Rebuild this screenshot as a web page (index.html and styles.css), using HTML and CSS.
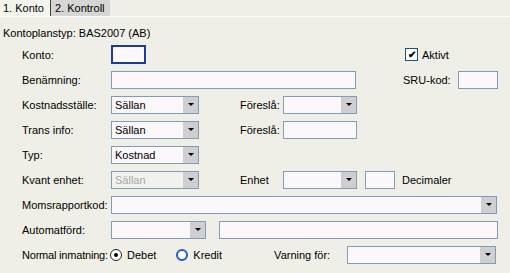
FILE: index.html
```html
<!DOCTYPE html>
<html>
<head>
<meta charset="utf-8">
<link rel="stylesheet" href="styles.css">
</head>
<body>
<div class="tabs">
  <div class="tab active">1. Konto</div>
  <div class="tab">2. Kontroll</div>
</div>
<div class="header">Kontoplanstyp: BAS2007 (AB)</div>
<div class="form">
  <div class="row">
    <span class="lbl">Konto:</span>
    <span class="input focus w-konto"></span>
    <span class="chk-wrap"><span class="chk">✔</span><span>Aktivt</span></span>
  </div>
  <div class="row">
    <span class="lbl">Benämning:</span>
    <span class="input w-ben"></span>
    <span class="lbl-sru">SRU-kod:</span>
    <span class="input w-sru"></span>
  </div>
  <div class="row">
    <span class="lbl">Kostnadsställe:</span>
    <span class="select w-sel"><span class="val">Sällan</span><span class="btn"></span></span>
    <span class="lbl2">Föreslå:</span>
    <span class="select w-sel2"><span class="val"></span><span class="btn"></span></span>
  </div>
  <div class="row">
    <span class="lbl">Trans info:</span>
    <span class="select w-sel"><span class="val">Sällan</span><span class="btn"></span></span>
    <span class="lbl2">Föreslå:</span>
    <span class="input w-sel2"></span>
  </div>
  <div class="row">
    <span class="lbl">Typ:</span>
    <span class="select w-sel"><span class="val">Kostnad</span><span class="btn"></span></span>
  </div>
  <div class="row">
    <span class="lbl">Kvant enhet:</span>
    <span class="select w-sel disabled"><span class="val">Sällan</span><span class="btn"></span></span>
    <span class="lbl2">Enhet</span>
    <span class="select w-sel2"><span class="val"></span><span class="btn"></span></span>
    <span class="input w-dec"></span>
    <span class="lbl-dec">Decimaler</span>
  </div>
  <div class="row">
    <span class="lbl">Momsrapportkod:</span>
    <span class="select w-moms"><span class="val"></span><span class="btn"></span></span>
  </div>
  <div class="row">
    <span class="lbl">Automatförd:</span>
    <span class="select w-auto"><span class="val"></span><span class="btn"></span></span>
    <span class="input w-auto2"></span>
  </div>
  <div class="row">
    <span class="lbl lbl-norm">Normal inmatning:</span>
    <span class="radio checked"></span><span class="rtxt">Debet</span>
    <span class="radio blue"></span><span class="rtxt">Kredit</span>
    <span class="lbl-varn">Varning för:</span>
    <span class="select w-varn"><span class="val"></span><span class="btn"></span></span>
  </div>
</div>
</body>
</html>
```
FILE: styles.css
```css
html, body {
  margin: 0;
  padding: 0;
}
body {
  width: 510px;
  height: 273px;
  overflow: hidden;
  background: #efefe7;
  font-family: "Liberation Sans", Arial, sans-serif;
  font-size: 11px;
  color: #000;
  white-space: nowrap;
}
.tabs {
  display: flex;
  height: 16px;
  border-bottom: 1px solid #ffffff;
}
.tab {
  box-sizing: border-box;
  width: 59px;
  padding-left: 4px;
  line-height: 16px;
  background: #d6d6d2;
}
.tab.active {
  width: 51px;
  background: #f4f4ee;
  border-right: 1px solid #404040;
  padding-left: 3px;
}
.header {
  padding: 9px 0 0 3px;
  height: 15px;
  line-height: 15px;
}
.form {
  display: flex;
  flex-direction: column;
  margin-top: 1px;
}
.row {
  display: flex;
  align-items: center;
  height: 25px;
}
.lbl {
  width: 89px;
  padding-left: 22px;
  flex: none;
}
.input, .select {
  box-sizing: border-box;
  height: 18px;
  border: 1px solid #7f9db9;
  background: #fcf7fb;
  flex: none;
}
.input.focus {
  border: 2px solid #1d3c8c;
  height: 19px;
}
.w-konto { width: 35px; }
.w-ben { width: 245px; }
.w-sru { width: 40px; margin-left: 11px; }
.w-sel { width: 88px; }
.w-sel2 { width: 74px; }
.w-dec { width: 30px; margin-left: 8px; }
.w-moms { width: 386px; }
.w-auto { width: 95px; }
.w-auto2 { width: 279px; margin-left: 13px; }
.w-varn { width: 149px; }
.select {
  display: flex;
  align-items: stretch;
}
.select .val {
  flex: 1;
  padding-left: 3px;
  line-height: 16px;
  background: #fcf7fb;
}
.select.disabled .val {
  color: #a8a8a8;
  background: #f1f1ee;
}
.select .btn {
  width: 15px;
  background: #cfcfd2;
  position: relative;
}
.select .btn::after {
  content: "";
  position: absolute;
  left: 5px;
  top: 6px;
  border-left: 3px solid transparent;
  border-right: 3px solid transparent;
  border-top: 3px solid #000;
}
.lbl2 {
  width: 43px;
  margin-left: 41px;
  flex: none;
}
.lbl-dec { margin-left: 7px; }
.chk-wrap {
  display: flex;
  align-items: center;
  margin-left: 259px;
}
.chk {
  box-sizing: border-box;
  width: 13px;
  height: 13px;
  border: 1px solid #1c5180;
  background: #fff;
  font-size: 10px;
  line-height: 11px;
  text-align: center;
  margin-right: 4px;
  font-weight: bold;
}
.lbl-sru { margin-left: 47px; width: 44px; }
.radio {
  box-sizing: border-box;
  width: 12px;
  height: 12px;
  border-radius: 50%;
  border: 1px solid #222;
  background: #fff;
  position: relative;
  flex: none;
}
.radio.checked::after {
  content: "";
  position: absolute;
  left: 3px;
  top: 3px;
  width: 4px;
  height: 4px;
  border-radius: 50%;
  background: #000;
}
.radio.blue {
  border: 2px solid #2458c8;
  margin-left: 20px;
}
.lbl-norm { width: 88px; letter-spacing: -0.2px; }
.rtxt { margin-left: 5px; }
.lbl-varn {
  margin-left: 52px;
  width: 73px;
}
```
